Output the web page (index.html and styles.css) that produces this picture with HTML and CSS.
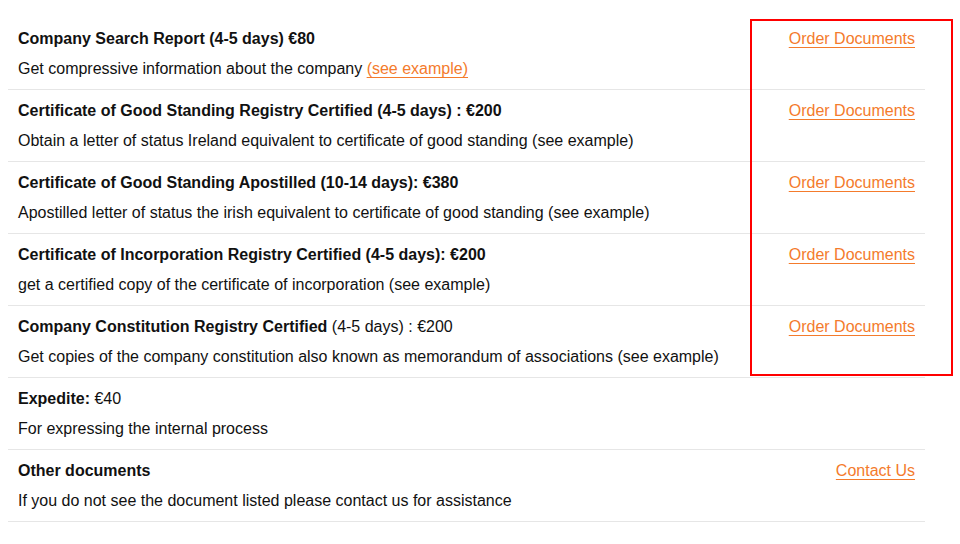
FILE: index.html
```html
<!DOCTYPE html>
<html>
<head>
<meta charset="utf-8">
<link rel="stylesheet" href="styles.css">
</head>
<body>
<div class="list">
  <div class="row">
    <div class="info">
      <div class="title"><b>Company Search Report (4-5 days) €80</b></div>
      <div class="desc">Get compressive information about the company <a class="link" href="#">(see example)</a></div>
    </div>
    <a class="link action" href="#">Order Documents</a>
  </div>
  <div class="row">
    <div class="info">
      <div class="title"><b>Certificate of Good Standing Registry Certified (4-5 days) : €200</b></div>
      <div class="desc">Obtain a letter of status Ireland equivalent to certificate of good standing (see example)</div>
    </div>
    <a class="link action" href="#">Order Documents</a>
  </div>
  <div class="row">
    <div class="info">
      <div class="title"><b>Certificate of Good Standing Apostilled (10-14 days): €380</b></div>
      <div class="desc">Apostilled letter of status the irish equivalent to certificate of good standing (see example)</div>
    </div>
    <a class="link action" href="#">Order Documents</a>
  </div>
  <div class="row">
    <div class="info">
      <div class="title"><b>Certificate of Incorporation Registry Certified (4-5 days): €200</b></div>
      <div class="desc">get a certified copy of the certificate of incorporation (see example)</div>
    </div>
    <a class="link action" href="#">Order Documents</a>
  </div>
  <div class="row">
    <div class="info">
      <div class="title"><b>Company Constitution Registry Certified</b> (4-5 days) : €200</div>
      <div class="desc">Get copies of the company constitution also known as memorandum of associations (see example)</div>
    </div>
    <a class="link action" href="#">Order Documents</a>
  </div>
  <div class="row">
    <div class="info">
      <div class="title"><b>Expedite:</b> €40</div>
      <div class="desc">For expressing the internal process</div>
    </div>
  </div>
  <div class="row">
    <div class="info">
      <div class="title"><b>Other documents</b></div>
      <div class="desc">If you do not see the document listed please contact us for assistance</div>
    </div>
    <a class="link action" href="#">Contact Us</a>
  </div>
  <div class="highlight"></div>
</div>
</body>
</html>
```

FILE: styles.css
```css
html, body {
  margin: 0;
  padding: 0;
  background: #fff;
}
body {
  padding: 8px;
  font-family: "Liberation Sans", Arial, sans-serif;
  font-size: 16px;
  color: #111;
}
.list {
  position: relative;
  width: 917px;
  padding-top: 10px;
}
.row {
  display: flex;
  justify-content: space-between;
  align-items: flex-start;
  padding: 9px 10px 7px 10px;
  height: 55px;
  border-bottom: 1px solid #e6e6e6;
}
.info {
  display: flex;
  flex-direction: column;
  gap: 6px;
}
.title, .desc {
  line-height: 24px;
  white-space: nowrap;
}
.title b {
  font-weight: bold;
}
.link {
  color: #f47b2c;
  text-decoration: underline;
  text-underline-offset: 3px;
  text-decoration-thickness: 1px;
}
.action {
  line-height: 24px;
}
.highlight {
  position: absolute;
  left: 742px;
  top: 11px;
  width: 199px;
  height: 353px;
  border: 2px solid #f00;
}
```
